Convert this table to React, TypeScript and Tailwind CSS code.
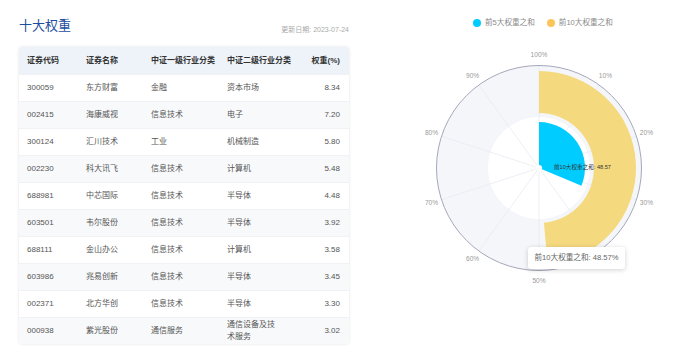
import React from "react"

const rows = [
  { code: "300059", name: "东方财富", l1: "金融", l2: "资本市场", w: "8.34" },
  { code: "002415", name: "海康威视", l1: "信息技术", l2: "电子", w: "7.20" },
  { code: "300124", name: "汇川技术", l1: "工业", l2: "机械制造", w: "5.80" },
  { code: "002230", name: "科大讯飞", l1: "信息技术", l2: "计算机", w: "5.48" },
  { code: "688981", name: "中芯国际", l1: "信息技术", l2: "半导体", w: "4.48" },
  { code: "603501", name: "韦尔股份", l1: "信息技术", l2: "半导体", w: "3.92" },
  { code: "688111", name: "金山办公", l1: "信息技术", l2: "计算机", w: "3.58" },
  { code: "603986", name: "兆易创新", l1: "信息技术", l2: "半导体", w: "3.45" },
  { code: "002371", name: "北方华创", l1: "信息技术", l2: "半导体", w: "3.30" },
  { code: "000938", name: "紫光股份", l1: "通信服务", l2: "通信设备及技术服务", w: "3.02" },
]

const font = { fontFamily: '"Liberation Sans", "Noto Sans CJK SC", sans-serif' }

// chart geometry
const CX = 190
const CY = 128

function pt(r: number, deg: number) {
  const a = (deg * Math.PI) / 180
  return [CX + r * Math.sin(a), CY - r * Math.cos(a)]
}

function sector(r0: number, r1: number, deg: number) {
  const large = deg > 180 ? 1 : 0
  const [x1, y1] = pt(r1, 0)
  const [x2, y2] = pt(r1, deg)
  if (r0 <= 0) {
    return `M${CX},${CY} L${x1},${y1} A${r1},${r1} 0 ${large} 1 ${x2},${y2} Z`
  }
  const [x3, y3] = pt(r0, deg)
  const [x4, y4] = pt(r0, 0)
  return `M${x1},${y1} A${r1},${r1} 0 ${large} 1 ${x2},${y2} L${x3},${y3} A${r0},${r0} 0 ${large} 0 ${x4},${y4} Z`
}

function Chart() {
  const top5 = 31.3
  const top10 = 48.57
  const ticks = [100, 10, 20, 30, 40, 50, 60, 70, 80, 90]
  return (
    <div className="relative">
      <svg width="343" height="323" className="block">
        <circle cx={CX} cy={CY} r={102} fill="#f5f6fa" />
        <circle cx={CX} cy={CY} r={51} fill="#ffffff" />
        {ticks.map((_, i) => {
          const [x, y] = pt(102, i * 36)
          return <line key={i} x1={CX} y1={CY} x2={x} y2={y} stroke="#e9ebf1" strokeWidth="0.8" />
        })}
        <path d={sector(55, 97, (top10 / 100) * 360)} fill="#f4d97e" />
        <path d={sector(0, 46, (top5 / 100) * 360)} fill="#00ccff" />
        <circle cx={CX} cy={CY} r={3} fill="#ffffff" />
        <circle cx={CX} cy={CY} r={102.5} fill="none" stroke="#a3a6ba" strokeWidth="1" />
        {ticks.map((l, i) => {
          // 40% sits under the tooltip
          if (l === 40) return null
          const [x, y] = pt(113, i * 36)
          return (
            <text key={l} x={x} y={y} fontSize="6.6" fill="#9a9a9a" textAnchor="middle" dominantBaseline="middle" style={font}>
              {l}%
            </text>
          )
        })}
        <text x={205} y={CY} fontSize="5.6" fill="#333" dominantBaseline="middle" style={font}>
          前10大权重之和: 48.57
        </text>
      </svg>
      <div
        className="absolute left-[179px] top-[207px] w-[97px] h-[22px] bg-white rounded-[3px] shadow-[0_1px_5px_rgba(0,0,0,0.18)] flex items-center justify-center text-[7.6px] text-[#666]"
        style={font}
      >
        前10大权重之和: 48.57%
      </div>
    </div>
  )
}

export default function App() {
  return (
    <div className="w-[692px] h-[363px] bg-white flex overflow-hidden" style={font}>
      <div className="w-[330px] ml-[19px] pt-[17px] shrink-0">
        <div className="flex justify-between items-end h-[18px]">
          <span className="text-[13px] leading-[18px] text-[#1d4e9e]">十大权重</span>
          <span className="text-[7px] leading-[10px] text-[#aaa]">更新日期: 2023-07-24</span>
        </div>
        <div className="mt-[12px] rounded-[3px] shadow-[0_0_3px_rgba(0,0,0,0.12)] overflow-hidden text-[8px] leading-[12px]">
          <div className="grid grid-cols-[59px_65px_76px_53px_1fr] pl-[8px] pr-[9px] h-[27px] items-center bg-[#eef3fa] font-bold text-[#333]">
            <span>证券代码</span>
            <span>证券名称</span>
            <span>中证一级行业分类</span>
            <span className="whitespace-nowrap">中证二级行业分类</span>
            <span className="text-right">权重(%)</span>
          </div>
          {rows.map((r, i) => (
            <div
              key={r.code}
              className={`grid grid-cols-[59px_65px_76px_53px_1fr] pl-[8px] pr-[9px] h-[27px] items-center text-[#555] border-t border-[#f1f2f5] ${
                i % 2 === 1 ? "bg-[#f8f9fb]" : "bg-white"
              }`}
            >
              <span>{r.code}</span>
              <span>{r.name}</span>
              <span>{r.l1}</span>
              <span className="w-[50px]">{r.l2}</span>
              <span className="text-right">{r.w}</span>
            </div>
          ))}
        </div>
      </div>
      <div className="flex-1">
        <div className="h-[40px] pt-[18px] flex items-start ml-[124px] text-[7.6px] leading-[10px] text-[#8a8a8a]">
          <span className="w-[8px] h-[8px] rounded-full bg-[#00ccff] mt-[1px]" />
          <span className="ml-[4px]">前5大权重之和</span>
          <span className="w-[8px] h-[8px] rounded-full bg-[#fbc55a] mt-[1px] ml-[12px]" />
          <span className="ml-[4px]">前10大权重之和</span>
        </div>
        <Chart />
      </div>
    </div>
  )
}
